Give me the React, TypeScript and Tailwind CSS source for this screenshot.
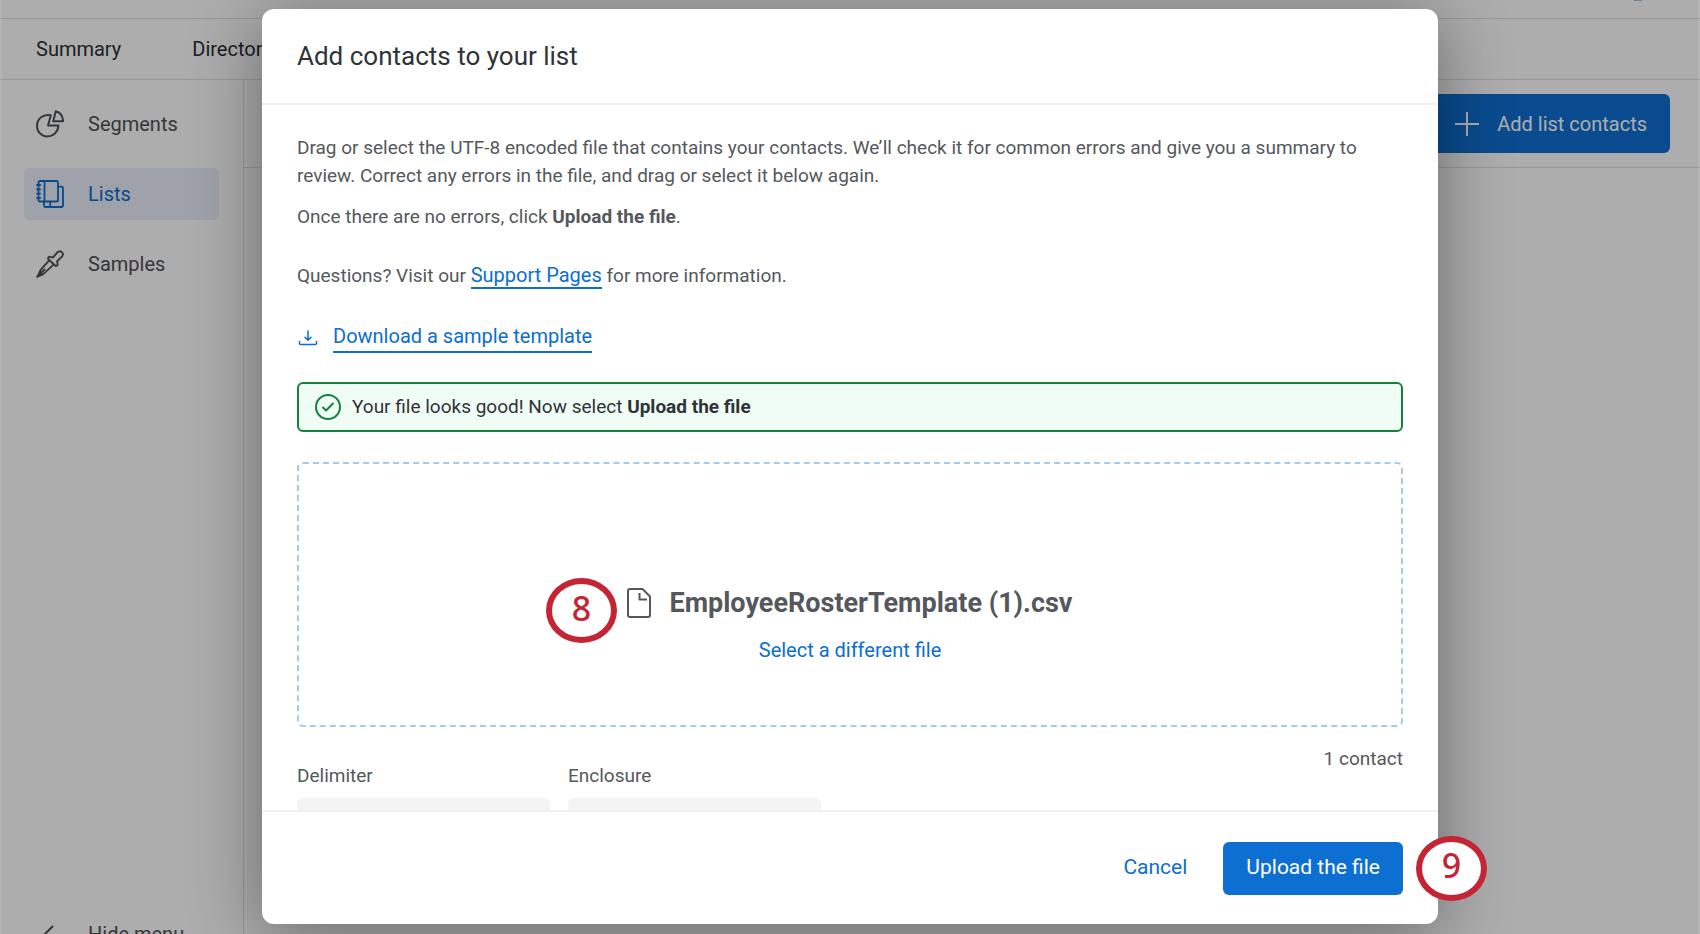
import type { ReactNode } from "react";

const TABS = ["Summary", "Directory"];

function PieIcon() {
  return (
    <svg className="h-7 w-7" viewBox="0 0 28 28" fill="none" stroke="currentColor" strokeWidth="2" strokeLinejoin="round">
      <path d="M14.800 5.200C7.200 3.600 1 8.900 1 15.900c0 5.900 4.600 10.500 10.300 10.500 6 0 10.900-4.400 11.100-10.900H12z" />
      <path d="M19.800 1.200l-2.600 10h9.900C26.800 6.100 24.300 2.400 19.800 1.200z" />
    </svg>
  );
}

function ListsIcon() {
  return (
    <svg className="h-7 w-7" viewBox="0 0 28 28" fill="none" stroke="currentColor" strokeWidth="1.800" strokeLinecap="round" strokeLinejoin="round">
      <rect x="2.500" y="1" width="19.500" height="20.500" rx="1.600" />
      <path d="M8.500 1v20.500M1 5h3.200M1 9.300h3.200M1 13.600h3.200M1 17.900h3.200" />
      <path d="M22.300 6.600h3.100A1.600 1.600 0 0 1 27 8.200v17.200a1.600 1.600 0 0 1-1.600 1.600H9.600A1.600 1.600 0 0 1 8 25.400v-3.700M14.200 21.700V27" />
    </svg>
  );
}

function DropperIcon() {
  return (
    <svg className="h-7 w-7" viewBox="0 0 28 28" fill="none" stroke="currentColor" strokeWidth="1.900" strokeLinecap="round" strokeLinejoin="round">
      <path d="M12.500 7.400c.8-.9 1.800-.9 2.700-.3l1.700.4 4.400-5c1.400-1.500 3.300-1.500 4.600-.3 1.200 1.300 1.200 3.300-.2 4.700L21.100 11.300l.3 1.900c.5.8.4 1.700-.4 2.300-.6.5-1.500.4-2.100-.2l-6-5.500c-.8-.7-1-1.600-.4-2.400z" />
      <path d="M13 10.600l-8.400 9.200c-.9 2.300-1.800 4.800-3.400 7.100 2.300-1 4.900-2 6.900-3.500l9.200-8.500M8.500 19.500l-5 5" />
    </svg>
  );
}

const NAV_ITEMS: { label: string; icon: ReactNode; active?: boolean }[] = [
  { label: "Segments", icon: <PieIcon /> },
  { label: "Lists", icon: <ListsIcon />, active: true },
  { label: "Samples", icon: <DropperIcon /> },
];

function Sidebar() {
  return (
    <nav className="flex w-61 shrink-0 flex-col border-r border-[#e0e0e2] px-6 pt-[18px]">
      <div className="flex flex-col gap-[18px]">
        {NAV_ITEMS.map((item) => (
          <a
            key={item.label}
            href="#"
            className={`flex h-[52px] items-center gap-6 rounded-md px-3 text-xl ${
              item.active ? "bg-[#eaeffa] text-[#0b6ed0]" : "text-[#4d5156]"
            }`}
          >
            {item.icon}
            {item.label}
          </a>
        ))}
      </div>
      <button className="mt-auto -mb-3.5 flex shrink-0 items-center gap-6 px-3 text-xl leading-7 text-[#4d5156]">
        <svg className="h-7 w-7" viewBox="0 0 28 28" fill="none" stroke="currentColor" strokeWidth="2">
          <path d="M17 6l-8 8 8 8" />
        </svg>
        Hide menu
      </button>
    </nav>
  );
}

function Page() {
  return (
    <div className="flex h-screen flex-col bg-white">
      <header className="flex h-[19px] shrink-0 items-start justify-end border-b border-[#e0e0e2] pr-[58px]">
        <span className="h-px w-2 bg-[#9cc0e6]" />
      </header>
      <nav className="flex h-[61px] shrink-0 items-center gap-[71px] border-b border-[#e0e0e2] px-9 text-xl text-[#2b2f35]">
        {TABS.map((tab) => (
          <a key={tab} href="#">
            {tab}
          </a>
        ))}
      </nav>
      <div className="flex min-h-0 flex-1">
        <Sidebar />
        <main className="flex-1">
          <div className="flex h-[88px] items-center justify-end border-b border-[#e0e0e2] pr-[30px]">
            <button className="flex h-[59px] items-center gap-[18px] rounded-md bg-[#0e6fd2] px-[23px] text-xl text-white">
              <svg className="h-6 w-6" viewBox="0 0 24 24" stroke="currentColor" strokeWidth="2">
                <path d="M0 12h24M12 0v24" />
              </svg>
              Add list contacts
            </button>
          </div>
        </main>
      </div>
    </div>
  );
}

function StepBadge({ step, className }: { step: number; className: string }) {
  return (
    <span
      className={`absolute flex h-[65px] w-[71px] items-center justify-center rounded-[50%] border-6 border-[#c42433] bg-white pb-1.5 font-['Noto_Sans'] text-[34px] font-medium text-[#c42433] ${className}`}
    >
      {step}
    </span>
  );
}

function FormatSelect({ id, label }: { id: string; label: string }) {
  return (
    <div className="flex w-[253px] flex-col gap-2">
      <label htmlFor={id}>{label}</label>
      <select id={id} disabled className="h-12 shrink-0 appearance-none rounded-md bg-[#f4f4f4] px-4" />
    </div>
  );
}

function UploadDialog() {
  return (
    <div
      role="dialog"
      aria-labelledby="dialog-title"
      className="flex h-full w-full max-w-[1176px] flex-col rounded-xl bg-white shadow-[0_10px_70px_rgba(0,0,0,0.4)]"
    >
      <div className="flex h-24 shrink-0 items-center border-b-2 border-[#f1f1f2] px-[35px]">
        <h1 id="dialog-title" className="text-[26px] text-[#2f3338]">
          Add contacts to your list
        </h1>
      </div>

      <div className="min-h-0 flex-1 overflow-hidden px-[35px] pt-[29px] text-[19px] leading-7 text-[#54585d]">
        <p>
          Drag or select the UTF-8 encoded file that contains your contacts. We’ll check it for common errors and give
          you a summary to review. Correct any errors in the file, and drag or select it below again.
        </p>
        <p className="mt-[13px]">
          Once there are no errors, click <strong>Upload the file</strong>.
        </p>
        <p className="mt-[31px]">
          Questions? Visit our{" "}
          <a href="#" className="border-b-2 border-[#0b6ed0] text-xl leading-6 text-[#0b6ed0]">
            Support Pages
          </a>{" "}
          for more information.
        </p>
        <div className="mt-8 flex items-center gap-[14px] text-[#0b6ed0]">
          <svg className="h-[22px] w-[22px]" viewBox="-1 -1 22 22" fill="none" stroke="currentColor" strokeWidth="1.500" strokeLinecap="round" strokeLinejoin="round">
            <path d="M1.500 13.500v1.700c0 .8.500 1.300 1.300 1.300h14.400c.8 0 1.300-.5 1.300-1.300v-1.700M10 3v9M7 9.300l3 3 3-3" />
          </svg>
          <a href="#" className="border-b-2 pb-px text-xl leading-7">
            Download a sample template
          </a>
        </div>

        <div className="mt-[29px] flex h-[50px] items-center gap-[11px] rounded-md border-2 border-[#138240] bg-[#f0fdf5] px-4 text-[#2f3338]">
          <svg className="h-[26px] w-[26px]" viewBox="0 0 26 26" fill="none" stroke="#138240" strokeWidth="2" strokeLinecap="round" strokeLinejoin="round">
            <circle cx="13" cy="13" r="12" />
            <path d="M8 13.500l3 3 7-7" />
          </svg>
          <span>
            Your file looks good! Now select <strong>Upload the file</strong>
          </span>
        </div>

        <div className="relative mt-[30px] flex h-[265px] flex-col items-center rounded-md border-2 border-dashed border-[#a3cbf0] pt-[121px]">
          <StepBadge step={8} className="top-[114px] left-[247px]" />
          <div className="flex items-center gap-[18px] text-[27px] leading-9 font-bold">
            <svg className="h-[30px] w-6" viewBox="0 0 24 30" fill="none" stroke="currentColor" strokeWidth="2" strokeLinejoin="round">
              <path d="M3 1h12.500L23 8.500V27a2 2 0 0 1-2 2H3a2 2 0 0 1-2-2V3a2 2 0 0 1 2-2z" />
              <path d="M12.500 5v6.500H20" />
            </svg>
            EmployeeRosterTemplate (1).csv
          </div>
          <button className="mt-[15px] text-xl leading-7 text-[#0b6ed0]">Select a different file</button>
        </div>

        <div className="mt-[18px] flex items-start justify-between">
          <div className="flex gap-[18px] pt-[17px]">
            <FormatSelect id="delimiter" label="Delimiter" />
            <FormatSelect id="enclosure" label="Enclosure" />
          </div>
          <p>1 contact</p>
        </div>
      </div>

      <div className="relative flex h-[114px] shrink-0 items-center justify-end gap-9 border-t-2 border-[#f1f1f2] px-[35px] text-[21px]">
        <button className="text-[#0b6ed0]">Cancel</button>
        <button className="h-[53px] rounded-md bg-[#0e6fd2] px-[23px] text-white">Upload the file</button>
        <StepBadge step={9} className="top-6 -right-[49px]" />
      </div>
    </div>
  );
}

export default function App() {
  return (
    <div className="relative h-screen overflow-hidden font-['Roboto',sans-serif]">
      <Page />
      <div className="absolute inset-0 flex justify-center border-x-2 border-white/10 bg-black/32 pt-[9px] pb-[10px]">
        <UploadDialog />
      </div>
    </div>
  );
}
